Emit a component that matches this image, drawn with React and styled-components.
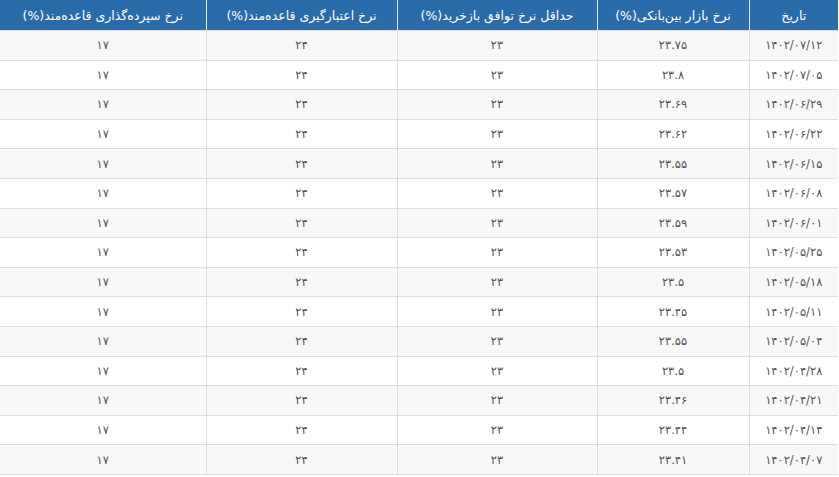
import React from 'react'
import styled, { createGlobalStyle } from 'styled-components'

const GlobalStyle = createGlobalStyle`
  body {
    margin: 0;
    background: #ffffff;
    font-family: "DejaVu Sans", "Noto Sans", sans-serif;
  }
`

const Wrapper = styled.div`
  direction: rtl;
  width: 838px;
`

const Table = styled.table`
  width: 838px;
  border-collapse: collapse;
  table-layout: fixed;
`

const Col = styled.col`
  width: ${props => props.w}px;
`

const HeadCell = styled.th`
  background-color: #2a6ca9;
  color: #ffffff;
  font-size: 12.5px;
  font-weight: normal;
  height: 30px;
  padding: 0 2px;
  text-align: center;
  white-space: nowrap;
  border-left: 1px solid #e3ecf5;
  border-bottom: 1px solid #dddddd;
  &:last-child {
    border-left: none;
  }
`

const Row = styled.tr`
  background-color: ${props => props.odd ? '#f8f8f8' : '#ffffff'};
`

const Cell = styled.td`
  height: 28.6px;
  padding: 0 6px;
  text-align: center;
  font-size: 11.5px;
  color: #555555;
  border: 1px solid #dddddd;
  border-top: none;
  &:first-child {
    border-right: none;
  }
  &:last-child {
    border-left: none;
  }
`

const columns = [
  { title: 'تاریخ', w: 89 },
  { title: 'نرخ بازار بین‌بانکی(%)', w: 152 },
  { title: 'حداقل نرخ توافق بازخرید(%)', w: 200 },
  { title: 'نرخ اعتبارگیری قاعده‌مند(%)', w: 191 },
  { title: 'نرخ سپرده‌گذاری قاعده‌مند(%)', w: 206 },
]

const rows = [
  ['۱۴۰۲/۰۷/۱۲', '۲۳.۷۵'],
  ['۱۴۰۲/۰۷/۰۵', '۲۳.۸'],
  ['۱۴۰۲/۰۶/۲۹', '۲۳.۶۹'],
  ['۱۴۰۲/۰۶/۲۲', '۲۳.۶۲'],
  ['۱۴۰۲/۰۶/۱۵', '۲۳.۵۵'],
  ['۱۴۰۲/۰۶/۰۸', '۲۳.۵۷'],
  ['۱۴۰۲/۰۶/۰۱', '۲۳.۵۹'],
  ['۱۴۰۲/۰۵/۲۵', '۲۳.۵۳'],
  ['۱۴۰۲/۰۵/۱۸', '۲۳.۵'],
  ['۱۴۰۲/۰۵/۱۱', '۲۳.۴۵'],
  ['۱۴۰۲/۰۵/۰۴', '۲۳.۵۵'],
  ['۱۴۰۲/۰۴/۲۸', '۲۳.۵'],
  ['۱۴۰۲/۰۴/۲۱', '۲۳.۴۶'],
  ['۱۴۰۲/۰۴/۱۴', '۲۳.۴۴'],
  ['۱۴۰۲/۰۴/۰۷', '۲۳.۴۱'],
]

export default function App() {
  return (
    <Wrapper>
      <GlobalStyle />
      <Table>
        <colgroup>
          {columns.map(c => <Col key={c.title} w={c.w} />)}
        </colgroup>
        <thead>
          <tr>
            {columns.map(c => (
              <HeadCell key={c.title}>{c.title}</HeadCell>
            ))}
          </tr>
        </thead>
        <tbody>
          {rows.map(([date, market], i) => (
            <Row key={date} odd={i % 2 === 0}>
              <Cell>{date}</Cell>
              <Cell>{market}</Cell>
              <Cell>۲۳</Cell>
              <Cell>۲۴</Cell>
              <Cell>۱۷</Cell>
            </Row>
          ))}
        </tbody>
      </Table>
    </Wrapper>
  )
}
